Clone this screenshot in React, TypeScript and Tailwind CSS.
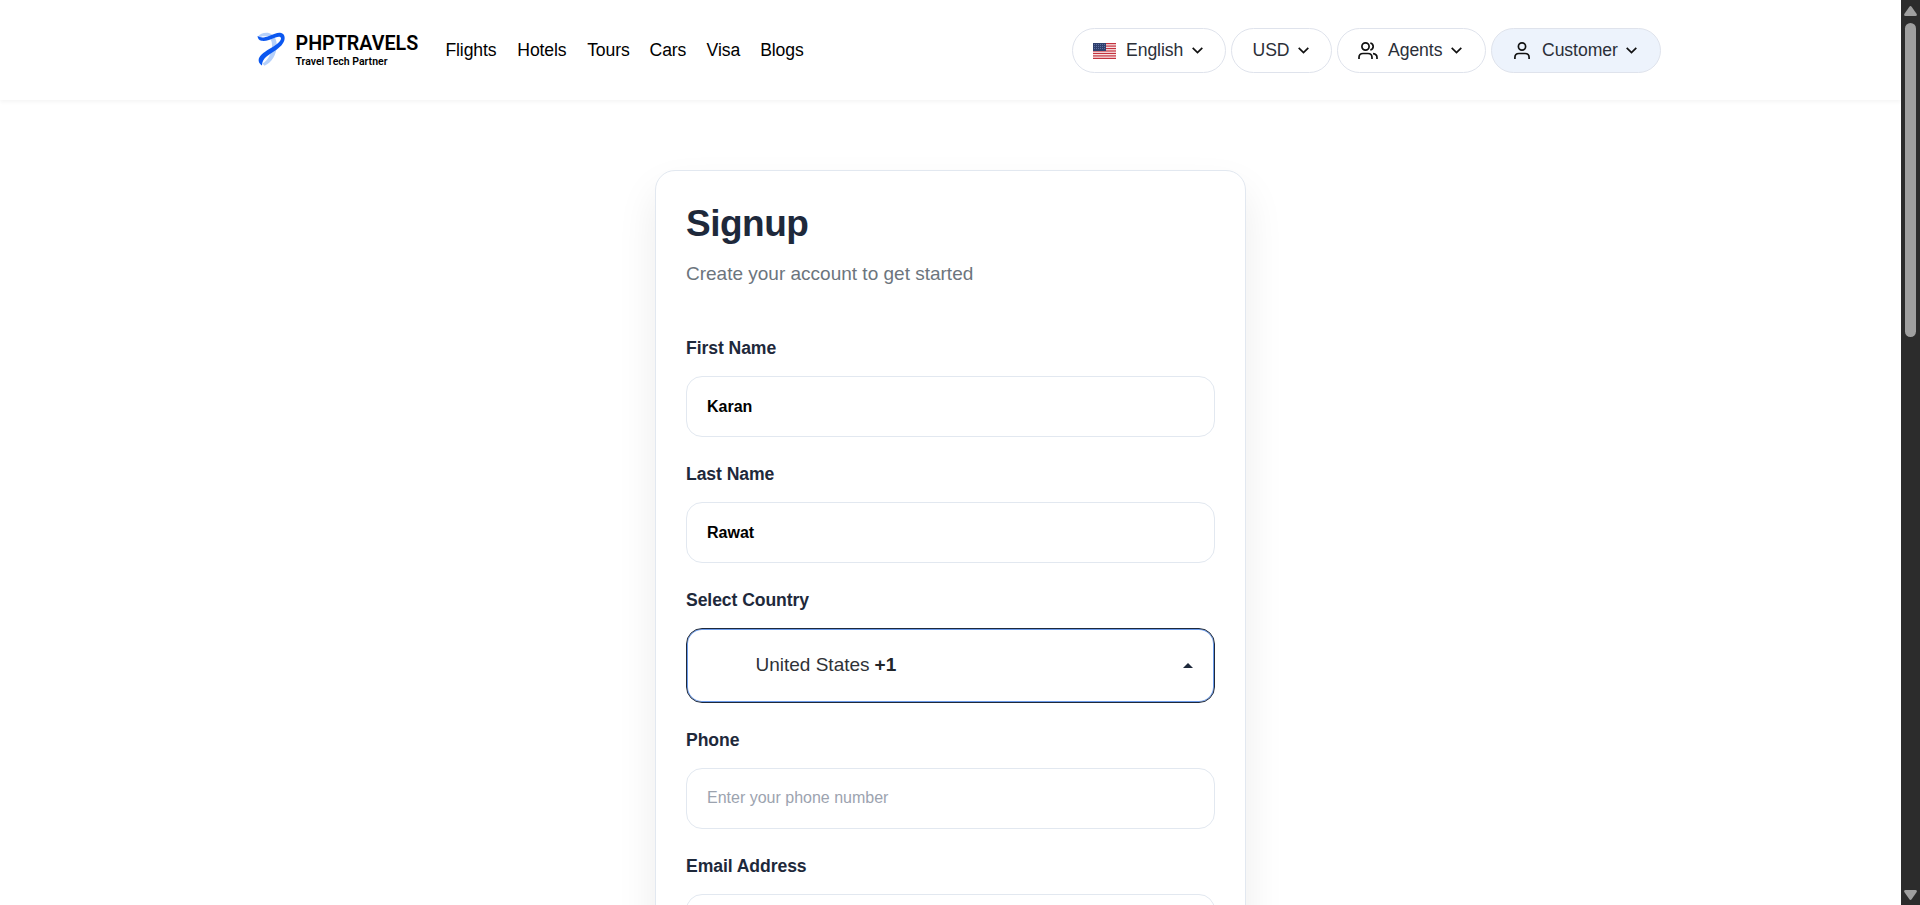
import type { ReactNode } from "react";

const navItems = [
  { label: "Flights", width: "w-[71.9px]" },
  { label: "Hotels", width: "w-[69.9px]" },
  { label: "Tours", width: "w-[62.4px]" },
  { label: "Cars", width: "w-[57px]" },
  { label: "Visa", width: "w-[53.6px]" },
  { label: "Blogs", width: "w-[60px]" },
];

function LogoMark() {
  return (
    <svg className="mt-[4px] h-[34px] w-[28px]" viewBox="0 0 28 34" fill="none">
      <path d="M1 4.500C3 1.500 8 0 12.500 1.200C17.500 2.800 20 8 19.800 14C19.500 22 15 30.500 7.500 33.800L5.500 31.500C11 28.500 14.800 21 15 14C15.200 9 13.500 5.500 10 4.500C7 3.800 4 4 2 6Z" fill="#b5d0fa" />
      <path d="M0.500 4C3.500 6 7.500 5.700 12 3.900C17 1.800 20 0.500 23 0.700C26.500 1 28 3.800 27.600 7C27 11.500 23 15.500 17.500 19C11.500 22.800 5 26.500 5 33.600C2 31.500 0.800 28.500 2.300 25.500C4.500 21 11 18 16.500 14.500C20.500 12 23.800 9.200 24 6.500C24.100 4.300 21.500 4.300 18.500 5.500C13 7.600 8.500 9.500 4.500 8.800C2 8.300 0.800 6.500 0.500 4Z" fill="#0b57f0" />
    </svg>
  );
}

function Logo() {
  return (
    <a className="flex w-[188.4px] gap-[10.5px]">
      <LogoMark />
      <span className="flex flex-col font-['Roboto',sans-serif] text-black">
        <span className="h-[27px] text-[19.7px] leading-[32px] font-semibold whitespace-nowrap">PHPTRAVELS</span>
        <span className="text-[10.5px] leading-[13px] font-semibold whitespace-nowrap">Travel Tech Partner</span>
      </span>
    </a>
  );
}

function Flag() {
  return (
    <svg className="mr-[10px] h-4 w-[23px]" viewBox="0 0 23 16" shapeRendering="crispEdges">
      <rect width="23" height="16" fill="#fbeeee" />
      {[0, 1, 2, 3, 4, 5, 6].map((n) => (
        <rect key={n} y={n * 2.46} width="23" height="1.23" fill="#c4323e" shapeRendering="auto" />
      ))}
      <rect width="13" height="8" fill="#2f406d" />
      {[1, 3, 5].map((y) =>
        [1, 3, 5, 7, 9, 11].map((x) => <rect key={`${x}-${y}`} x={x} y={y} width="1" height="1" fill="#5f70a0" />),
      )}
    </svg>
  );
}

function UsersIcon() {
  return (
    <svg className="mr-[10px] size-5" viewBox="0 0 20 20" fill="none" stroke="#111" strokeWidth="1.700">
      <circle cx="7.500" cy="5.500" r="3.600" />
      <path d="M1 18V16.500C1 14 2.500 12.500 5 12.500H10C12.500 12.500 14 14 14 16.500V18" />
      <path d="M12.300 2C14.100 2.400 15.200 3.800 15.200 5.500S14.100 8.600 12.300 9" />
      <path d="M15 12.600C17.600 12.900 19 14.300 19 16.500V18" />
    </svg>
  );
}

function UserIcon() {
  return (
    <svg className="mr-[10px] size-5" viewBox="0 0 20 20" fill="none" stroke="#111" strokeWidth="1.700">
      <circle cx="10" cy="5.500" r="3.600" />
      <path d="M2.900 18V16.500C2.900 14 4.400 12.500 6.900 12.500H13.100C15.600 12.500 17.100 14 17.100 16.500V18" />
    </svg>
  );
}

function Pill({ className, label, icon }: { className: string; label: string; icon?: ReactNode }) {
  return (
    <button className={`flex h-[45px] items-center rounded-full border border-[#dfe3ec] text-[17.6px] leading-none tracking-[-0.06px] text-[#2b2f38] ${className}`}>
      {icon}
      <span>{label}</span>
      <svg className="ml-[8.5px] h-[7px] w-[11px]" viewBox="0 0 11 7" fill="none" stroke="#111" strokeWidth="1.700">
        <path d="M0.700 0.900L5.500 5.600L10.300 0.900" />
      </svg>
    </button>
  );
}

function Field({ label, children }: { label: string; children: ReactNode }) {
  return (
    <div>
      <label className="block h-[41px] pt-px text-[17.6px] leading-[24px] font-bold tracking-[-0.08px] text-[#1e293b]">{label}</label>
      {children}
    </div>
  );
}

function TextInput({ value, placeholder }: { value?: string; placeholder?: string }) {
  return (
    <input
      className={`block h-[61px] w-full rounded-2xl border border-[#e2e8f0] bg-white px-5 text-base font-bold text-black placeholder:font-normal placeholder:text-[#9ca3af] ${value ? "pt-px" : "pb-px"}`}
      defaultValue={value}
      placeholder={placeholder}
    />
  );
}

function Scrollbar() {
  return (
    <div className="flex h-full w-[19px] shrink-0 flex-col items-center bg-[#2c2c2c]">
      <svg className="mt-[6px] h-[10px] w-[13px]" viewBox="0 0 13 10" fill="#9f9f9f">
        <path d="M5.200 0.900Q6.500-0.900 7.800 0.900L12.700 8Q13.300 10 11.500 10H1.500Q-0.300 10 0.300 8Z" />
      </svg>
      <div className="mt-[7px] h-[314px] w-[11px] rounded-full bg-[#9f9f9f]" />
      <svg className="mt-auto mb-[5px] h-[10px] w-[13px]" viewBox="0 0 13 10" fill="#9f9f9f">
        <path d="M5.200 9.100Q6.500 10.900 7.800 9.100L12.700 2Q13.300 0 11.500 0H1.500Q-0.300 0 0.300 2Z" />
      </svg>
    </div>
  );
}

export default function App() {
  return (
    <div className="flex h-[905px] overflow-hidden bg-white font-['Liberation_Sans',Arial,sans-serif]">
      <div className="flex min-w-0 flex-1 flex-col overflow-hidden">
        <header className="flex h-[100px] shrink-0 pl-[257px] shadow-[0_2px_4px_rgba(0,0,0,0.045)]">
          <div className="flex pt-7">
            <Logo />
            <nav className="flex h-[45px] items-center text-[17.6px] tracking-[-0.1px] text-black">
              {navItems.map((item) => (
                <a key={item.label} className={item.width}>{item.label}</a>
              ))}
            </nav>
          </div>
          <div className="mr-[240px] ml-auto flex gap-[5px] pt-7">
            <Pill className="w-[154px] pl-5" label="English" icon={<Flag />} />
            <Pill className="w-[101px] pl-[20.5px]" label="USD" />
            <Pill className="w-[149px] pl-5" label="Agents" icon={<UsersIcon />} />
            <Pill className="w-[170px] bg-[#edf3fc] pl-5" label="Customer" icon={<UserIcon />} />
          </div>
        </header>
        <main className="flex justify-center pt-[70px]">
          <form className="h-[1100px] w-[591px] rounded-[20px] border border-[#e2e8f0] bg-white px-[30px] pt-[30px] shadow-[0_20px_40px_rgba(0,0,0,0.08)]">
            <h1 className="h-[60px] text-[37px] leading-[45px] font-bold tracking-[-0.5px] text-[#1e293b]">Signup</h1>
            <p className="h-[74px] text-[19px] leading-[26px] text-[#6c757d]">Create your account to get started</p>
            <div className="flex flex-col gap-6">
              <Field label="First Name"><TextInput value="Karan" /></Field>
              <Field label="Last Name"><TextInput value="Rawat" /></Field>
              <Field label="Select Country">
                <button type="button" className="flex h-[75px] w-full items-center rounded-2xl border border-[#1e293b] pr-[21px] pb-px pl-[68.5px] text-[19px] text-[#2f3237] shadow-[inset_0_0_0_1px_#6c9bea]">
                  United States <strong className="ml-[5px] text-[#212529]">+1</strong>
                  <svg className="ml-auto h-[5px] w-[10px]" viewBox="0 0 10 5"><path d="M0 5L5 0L10 5Z" fill="#1e293b" /></svg>
                </button>
              </Field>
              <Field label="Phone"><TextInput placeholder="Enter your phone number" /></Field>
              <Field label="Email Address"><TextInput /></Field>
            </div>
          </form>
        </main>
      </div>
      <Scrollbar />
    </div>
  );
}
